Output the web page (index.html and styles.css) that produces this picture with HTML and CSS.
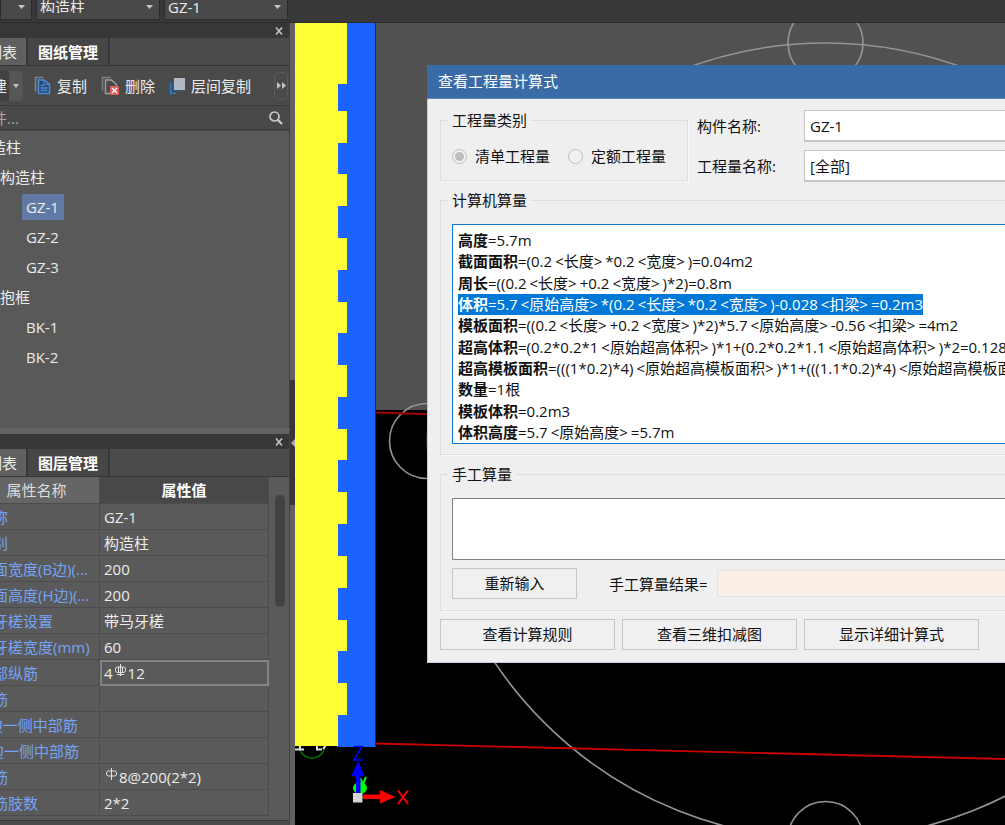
FILE: index.html
```html
<!DOCTYPE html>
<html lang="zh-CN">
<head>
<meta charset="utf-8">
<title>查看工程量计算式</title>
<link rel="stylesheet" href="styles.css">
</head>
<body>
<div class="app">
  <header class="toolbar">
    <select class="combo combo-first" aria-label="楼层"><option></option></select>
    <select class="combo" aria-label="构件类型"><option>构造柱</option></select>
    <select class="combo" aria-label="构件"><option>GZ-1</option></select>
  </header>
  <div class="workspace">
    <aside class="dock">
      <section class="panel panel-components">
        <div class="panel-title">
          <button class="close" aria-label="关闭"><svg width="8" height="8" viewBox="0 0 8 8"><path d="M1 0.500 7 7.500M7 0.500 1 7.500" stroke="#c4c4c4" stroke-width="1.600"/></svg></button>
        </div>
        <div class="tabs">
          <button class="tab active">构件列表</button>
          <button class="tab">图纸管理</button>
        </div>
        <div class="actions">
          <button class="new">新建<span class="new-arrow"></span></button>
          <button class="action"><svg width="17" height="19" viewBox="0 0 17 19" fill="none"><path d="M1.500 15.500V1.500H9.500" stroke="#77838f" stroke-width="1.600"/><path d="M4.500 4H10L15.500 8.500V17.500H4.500Z" fill="#24486f" stroke="#4c8bd4" stroke-width="1.600"/><path d="M10 4V8.500H15" stroke="#4c8bd4"/><path d="M6.500 9.500H10M6.500 12H13.500M6.500 14.500H13.500" stroke="#4c8bd4" stroke-width="1.300"/></svg>复制</button>
          <button class="action"><svg width="18" height="19" viewBox="0 0 18 19" fill="none"><path d="M1.500 14.500V1.500H9.500" stroke="#7d8285" stroke-width="1.500"/><path d="M9 17.500H4.500V4H10.500L15.500 8.500V10" stroke="#9b9fa2" stroke-width="1.400"/><rect x="9" y="10" width="9" height="9" fill="#dd5a5a"/><path d="M11 12 16 17M16 12 11 17" stroke="#fff" stroke-width="1.400"/></svg>删除</button>
          <button class="action"><svg width="16" height="18" viewBox="0 0 16 18" fill="none"><path d="M1.500 6V16.500H7M1.500 16 5 13" stroke="#2e78af" stroke-width="1.600"/><rect x="3" y="3" width="10" height="12" fill="#345571"/><rect x="5" y="1" width="11" height="12" fill="#b4b7c4"/></svg>层间复制</button>
          <button class="more" aria-label="更多"><svg width="9" height="7" viewBox="0 0 9 7"><path d="M0 0 4 3.500 0 7ZM5 0 9 3.500 5 7Z" fill="#c5c5c5"/></svg></button>
        </div>
        <div class="search">
          <input type="text" placeholder="搜索构件..." aria-label="搜索构件">
          <svg width="14" height="14" viewBox="0 0 14 14" fill="none"><circle cx="5.500" cy="5.500" r="4.500" stroke="#c9c9c9" stroke-width="1.700"/><path d="M8.800 8.800 13 13" stroke="#c9c9c9" stroke-width="2.400"/></svg>
        </div>
        <ul class="tree">
          <li class="level-0"><span>构造柱</span></li>
          <li class="level-1"><span>构造柱</span></li>
          <li class="level-2"><span class="selected">GZ-1</span></li>
          <li class="level-2"><span>GZ-2</span></li>
          <li class="level-2"><span>GZ-3</span></li>
          <li class="level-1"><span>抱框</span></li>
          <li class="level-2"><span>BK-1</span></li>
          <li class="level-2"><span>BK-2</span></li>
        </ul>
      </section>
      <section class="panel panel-properties">
        <div class="panel-title">
          <button class="close" aria-label="关闭"><svg width="8" height="8" viewBox="0 0 8 8"><path d="M1 0.500 7 7.500M7 0.500 1 7.500" stroke="#c4c4c4" stroke-width="1.600"/></svg></button>
        </div>
        <div class="tabs">
          <button class="tab active">属性列表</button>
          <button class="tab">图层管理</button>
        </div>
        <div class="properties">
          <table>
            <thead><tr><th class="name-head">属性名称</th><th>属性值</th></tr></thead>
            <tbody>
              <tr><td>名称</td><td>GZ-1</td></tr>
              <tr><td>类别</td><td>构造柱</td></tr>
              <tr><td>截面宽度(B边)(...</td><td>200</td></tr>
              <tr><td>截面高度(H边)(...</td><td>200</td></tr>
              <tr><td>马牙槎设置</td><td>带马牙槎</td></tr>
              <tr><td>马牙槎宽度(mm)</td><td>60</td></tr>
              <tr><td>全部纵筋</td><td class="editing">4<svg class="rebar" width="13" height="13" viewBox="0 0 13 13" fill="none" stroke="#e4e4e4"><path d="M6.500 0V12M3 10.500H10M4.500 3V9M8.500 3V9"/><rect x="1.500" y="3" width="10" height="5.500" rx="2"/></svg>12</td></tr>
              <tr><td>角筋</td><td></td></tr>
              <tr><td>B边一侧中部筋</td><td></td></tr>
              <tr><td>H边一侧中部筋</td><td></td></tr>
              <tr><td>箍筋</td><td><svg class="rebar" width="13" height="13" viewBox="0 0 13 13" fill="none" stroke="#e4e4e4"><path d="M6.500 0V12"/><rect x="1.500" y="3" width="10" height="5" rx="2"/></svg>8@200(2*2)</td></tr>
              <tr><td>箍筋肢数</td><td>2*2</td></tr>
            </tbody>
          </table>
          <div class="scrollbar"><div class="thumb"></div></div>
        </div>
      </section>
    </aside>
    <div class="splitter">
      <div class="grip"><svg width="4" height="8" viewBox="0 0 4 8"><path d="M4 0V8L0 4Z" fill="#aaa"/></svg></div>
    </div>
    <main class="viewport">
      <svg class="scene" width="1400" height="802" viewBox="295 23 1400 802" fill="none">
        <rect x="295" y="410" width="1400" height="415" fill="#000"/>
        <g stroke="#949494" stroke-width="1.600">
          <circle cx="825.500" cy="441" r="398"/>
          <circle cx="825.500" cy="43" r="37.500"/>
          <circle cx="427" cy="441" r="37.500"/>
          <circle cx="825.500" cy="839" r="37.500"/>
        </g>
        <path d="M375 412.500 440 414.500" stroke="#a00000" stroke-width="2"/>
        <path d="M375 743.500 1005 759 1695 776" stroke="#c80000" stroke-width="1.800"/>
        <path d="M299 745A13 13 0 0 0 325 745" stroke="#087808" stroke-width="1.300"/>
        <path d="M295 749.500H304M300 745V749M316 749.500H322M317 745V749M326 745 323 749" stroke="#ddd" stroke-width="2"/>
        <rect x="337" y="23" width="38.500" height="724" fill="#1b62ff"/>
        <path d="M375.500 23V747" stroke="#102e70"/>
        <path fill="#ffff35" d="M295 23H347V84H338V111H347V143H338V174H347V206H338V238H347V270H338V302H347V333H338V365H347V397H338V429H347V460H338V492H347V524H338V556H347V588H338V620H347V651H338V683H347V715H338V746H295Z"/>
        <path d="M358 795 366 777M360 778 363 784" stroke="#0f0" stroke-width="2"/>
        <ellipse cx="360" cy="788" rx="7" ry="6" fill="#0f0"/>
        <path d="M356 793V776H351.500L358 761 364.500 776H360.500V793Z" fill="#00f"/>
        <path d="M354 746.500H362L354 760H363" stroke="#00f" stroke-width="1.600"/>
        <path d="M363 794.500H380V790L395.500 797 380 803.500V799H363Z" fill="#f00"/>
        <rect x="353" y="793" width="9.500" height="9.500" fill="#d5d5d5"/>
        <path d="M398 790.500 408 804M408 790.500 398 804" stroke="#f00" stroke-width="2"/>
      </svg>
      <div class="dialog" role="dialog" aria-labelledby="dialog-title">
        <h1 class="dialog-title" id="dialog-title">查看工程量计算式</h1>
        <div class="dialog-body">
          <div class="top">
            <fieldset class="group kind">
              <legend>工程量类别</legend>
              <label class="radio"><input type="radio" name="kind" checked disabled>清单工程量</label>
              <label class="radio"><input type="radio" name="kind" disabled>定额工程量</label>
            </fieldset>
            <div class="fields">
              <label for="component">构件名称:</label><input class="field" id="component" type="text" value="GZ-1">
              <label for="quantity">工程量名称:</label><input class="field" id="quantity" type="text" value="[全部]">
            </div>
          </div>
          <fieldset class="group computed">
            <legend>计算机算量</legend>
            <div class="formulas" tabindex="0">
              <p><b>高度</b>=5.7m</p>
              <p><b>截面面积</b>=(0.2<var>&lt;长度&gt;</var>*0.2<var>&lt;宽度&gt;</var>)=0.04m2</p>
              <p><b>周长</b>=((0.2<var>&lt;长度&gt;</var>+0.2<var>&lt;宽度&gt;</var>)*2)=0.8m</p>
              <p class="marked"><b>体积</b>=5.7<var>&lt;原始高度&gt;</var>*(0.2<var>&lt;长度&gt;</var>*0.2<var>&lt;宽度&gt;</var>)-0.028<var>&lt;扣梁&gt;</var>=0.2m3</p>
              <p><b>模板面积</b>=((0.2<var>&lt;长度&gt;</var>+0.2<var>&lt;宽度&gt;</var>)*2)*5.7<var>&lt;原始高度&gt;</var>-0.56<var>&lt;扣梁&gt;</var>=4m2</p>
              <p><b>超高体积</b>=(0.2*0.2*1<var>&lt;原始超高体积&gt;</var>)*1+(0.2*0.2*1.1<var>&lt;原始超高体积&gt;</var>)*2=0.128</p>
              <p><b>超高模板面积</b>=(((1*0.2)*4)<var>&lt;原始超高模板面积&gt;</var>)*1+(((1.1*0.2)*4)<var>&lt;原始超高模板面</var></p>
              <p><b>数量</b>=1根</p>
              <p><b>模板体积</b>=0.2m3</p>
              <p><b>体积高度</b>=5.7<var>&lt;原始高度&gt;</var>=5.7m</p>
            </div>
          </fieldset>
          <fieldset class="group manual">
            <legend>手工算量</legend>
            <textarea aria-label="手工算量"></textarea>
            <div class="result">
              <button class="push">重新输入</button>
              <label for="result">手工算量结果=</label>
              <input id="result" type="text" readonly>
            </div>
          </fieldset>
          <div class="buttons">
            <button class="push">查看计算规则</button>
            <button class="push">查看三维扣减图</button>
            <button class="push">显示详细计算式</button>
          </div>
        </div>
      </div>
    </main>
  </div>
</div>
</body>
</html>
```

FILE: styles.css
```css
* { box-sizing: border-box; }

body {
  margin: 0;
  overflow: hidden;
  background: #373737;
  color: #ececec;
  font: 15px/20px "Open Sans", "Noto Sans CJK SC", sans-serif;
}

button, input, select, textarea { font: inherit; color: inherit; }
button { margin: 0; padding: 0; border: 0; background: none; white-space: nowrap; }

.app { display: flex; flex-direction: column; height: 100vh; }

/* Top toolbar */
.toolbar {
  display: flex;
  flex: none;
  gap: 4px;
  height: 23px;
  padding-bottom: 2px;
  border-bottom: 1px solid #2b2b2b;
  background: #383838;
}
.combo {
  appearance: none;
  width: 124px;
  height: 20px;
  padding: 0 0 6px 3px;
  border: solid #2c2c2c;
  border-width: 0 1px 1px;
  border-radius: 0;
  background: #494949 url("data:image/svg+xml,%3Csvg xmlns='http://www.w3.org/2000/svg' width='7' height='4'%3E%3Cpath d='M0 0h7L3.500 4z' fill='%23c4c4c4'/%3E%3C/svg%3E") no-repeat right 6px top 5px;
  line-height: 14px;
}
.combo-first { width: 32px; }

.workspace { display: flex; flex: 1; min-height: 0; }

/* Left dock, scrolled partly past the window edge */
.dock {
  display: flex;
  flex: none;
  flex-direction: column;
  width: 350px;
  margin-left: -60px;
  padding-bottom: 4px;
  background: #4a4a4a;
}
.panel { display: flex; flex-direction: column; border-right: 1px solid #404040; }
.panel-components { flex: 1; }
.panel-properties { border-top: 6px solid #626262; }
.panel-title {
  display: flex;
  justify-content: flex-end;
  align-items: center;
  height: 15px;
  padding-right: 6px;
  background: #373737;
}
.close { display: flex; }
.tabs { display: flex; height: 28px; border-bottom: 1px solid #363636; background: #4b4b4b; }
.tab {
  width: 82px;
  border-right: 2px solid #373737;
  background: #464646;
  color: #fff;
  font-weight: 700;
}
.tab.active {
  width: 88px;
  padding-right: 9px;
  background: #606060;
  color: #ececec;
  font-weight: 400;
  text-align: right;
}
.actions { display: flex; align-items: center; height: 39px; background: #4a4a4a; }
.new {
  display: flex;
  align-items: center;
  justify-content: flex-end;
  width: 83px;
  height: 30px;
  border-radius: 4px;
  background: linear-gradient(to right, #414141 69px, #565656 69px);
}
.new-arrow {
  margin: 0 4px 0 6px;
  border: solid transparent;
  border-width: 4px 3px 0;
  border-top-color: #c4c4c4;
}
.action { display: flex; align-items: center; gap: 6px; margin-left: 11px; }
.action + .action { margin-left: 14px; }
.more {
  display: flex;
  align-items: center;
  justify-content: center;
  width: 14px;
  height: 28px;
  margin: 0 1px 0 auto;
  border: 1px solid #5a5a5a;
  border-radius: 5px;
}
.search {
  display: flex;
  align-items: center;
  height: 25px;
  padding: 0 6px 0 7px;
  border: solid #3a3a3a;
  border-width: 1px 0;
  background: #494949;
}
.search input { flex: 1; min-width: 0; padding: 0; border: 0; outline: 0; background: none; }
.search input::placeholder { color: #a8a8a8; opacity: 1; }
.tree {
  flex: 1;
  margin: 0;
  padding: 1px 0 0;
  border-top: 1px solid #434343;
  background: #595959;
  list-style: none;
}
.tree li { display: flex; height: 30px; align-items: center; }
.tree span { padding: 3px 5px 3px 4px; }
.level-0 { padding-left: 32px; }
.level-1 { padding-left: 56px; }
.level-2 { padding-left: 82px; }
.tree .selected { background: #617aa5; }

.properties {
  display: flex;
  align-items: flex-start;
  min-height: 344px;
  border-bottom: 1px solid #363636;
  background: #5a5a5a;
}
.properties table {
  width: 329px;
  border-collapse: separate;
  border-spacing: 0;
  table-layout: fixed;
}
.properties th, .properties td {
  height: 26px;
  padding: 0 0 0 4px;
  border: solid #4d4d4d;
  border-width: 0 1px 1px 0;
  text-align: left;
  white-space: nowrap;
}
.properties th { height: 27px; padding: 0; background: #484848; color: #fff; text-align: center; }
.properties .name-head {
  width: 160px;
  padding-left: 34px;
  background: #656565;
  color: #ddd;
  font-weight: 400;
}
.properties td:first-child { padding-left: 38px; color: #76a4f5; }
.properties td.editing { padding-left: 2px; border: 2px solid #858585; }
.rebar { margin: 0 1px; vertical-align: 2px; }
.scrollbar { flex: 1; padding: 18px 0 0 6px; }
.thumb { width: 10px; height: 112px; border-radius: 5px; background: #424242; }

.splitter { flex: none; width: 5px; padding-top: 357px; background: #606060; }
.grip { display: flex; align-items: center; justify-content: flex-end; height: 125px; background: #373737; }

/* Model view */
.viewport { position: relative; flex: 1; min-width: 0; overflow: hidden; background: #515151; }
.scene { display: block; }

/* Floating window */
.dialog {
  position: absolute;
  top: 42px;
  left: 132px;
  right: -60px;
  border: 1px solid #c5cbda;
  border-top: 0;
  background: #efefef;
  color: #111;
}
.dialog-title {
  height: 34px;
  margin: 0 -1px;
  padding-left: 11px;
  border-bottom: 1px solid #6288b8;
  background: #396ba6;
  color: #fff;
  font-size: 15px;
  font-weight: 400;
  line-height: 33px;
}
.dialog-body { padding: 11px 12px 12px; }
.top { display: flex; gap: 9px; }
.group {
  min-width: 0;
  margin: 0;
  padding: 0 11px;
  border: 1px solid #dedede;
  box-shadow: 1px 1px 0 #fafafa;
}
.group legend { height: 20px; margin-left: -4px; padding: 0 4px; line-height: 20px; }
.kind { display: flex; gap: 18px; width: 248px; height: 71px; }
.radio { display: flex; align-items: center; gap: 8px; height: 30px; margin-top: 11px; white-space: nowrap; }
.radio input {
  appearance: none;
  width: 15px;
  height: 15px;
  margin: 0;
  border: 1px solid #bebebe;
  border-radius: 50%;
  background: #f1f1f1;
}
.radio input:checked { background: radial-gradient(circle, #bdbdbd 4px, #f1f1f1 5px); }
.fields {
  display: grid;
  flex: 1;
  grid-template-columns: 107px 1fr;
  grid-auto-rows: 32px;
  row-gap: 8px;
  align-items: center;
}
.field { width: 100%; height: 32px; padding: 0 5px; border: 2px solid #c5c5c5; border-width: 1px 2px 2px 1px; background: #fff; }
.computed { margin-top: 8px; padding-bottom: 10px; }
.formulas {
  display: flex;
  flex-direction: column;
  justify-content: space-between;
  align-items: flex-start;
  height: 220px;
  margin-top: 14px;
  padding: 5px 5px 0;
  border: 1px solid #1279d1;
  background: #fff;
  line-height: 21px;
  white-space: nowrap;
  overflow: hidden;
}
.formulas p { margin: 0; }
.formulas b { font-weight: 700; }
.formulas var { margin: 0 3px; font-style: normal; }
.formulas .marked { background: #0078d7; color: #fff; }
.manual { margin-top: 9px; padding-bottom: 11px; }
.manual textarea {
  display: block;
  width: 100%;
  height: 62px;
  margin-top: 14px;
  border: 1px solid #828282;
  border-radius: 0;
  background: #fff;
  resize: none;
}
.result { display: flex; align-items: center; margin-top: 8px; }
.result label { margin-left: 32px; white-space: nowrap; }
.result input { flex: 1; height: 27px; margin-left: 9px; border: 1px solid #e0e0e0; background: #faefe6; }
.push { width: 125px; height: 31px; padding-bottom: 2px; border: 1px solid #c6c6c6; background: #f0f0f0; }
.buttons { display: flex; gap: 7px; margin-top: 8px; }
.buttons .push { width: 175px; }
```
